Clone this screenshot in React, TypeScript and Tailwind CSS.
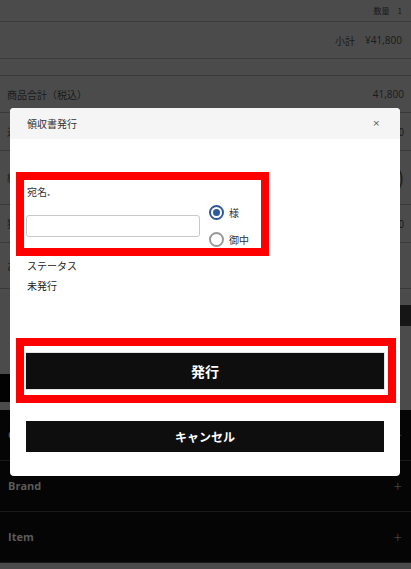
import React from "react";

const jp = { fontFamily: '"Noto Sans CJK JP", "Noto Sans", sans-serif' };

function Radio({ checked, label }: { checked: boolean; label: string }) {
  return (
    <div className="flex items-center h-[15px]">
      <span
        className={
          checked
            ? "w-[15px] h-[15px] rounded-full border-[2px] border-[#2c5a9c] bg-white flex items-center justify-center"
            : "w-[15px] h-[15px] rounded-full border-[2px] border-[#9a9a9a] bg-white"
        }
      >
        {checked && <span className="w-[7px] h-[7px] rounded-full bg-[#2c5a9c]" />}
      </span>
      <span className="ml-[5px] text-[10px] leading-[14px] text-[#333]">{label}</span>
    </div>
  );
}

export default function App() {
  return (
    <div className="relative w-[411px] h-[569px] overflow-hidden bg-[#4b4b4b]" style={jp}>
      {/* background page (dimmed) */}
      <div className="flex flex-col text-[#1a1a1a]">
        <div className="h-[22px] border-b border-[#3a3a3a] flex items-center justify-end pr-[9px] text-[8px]">
          数量　1
        </div>
        <div className="h-[37px] border-b border-[#3a3a3a] flex items-center justify-end pr-[9px] text-[10px]">
          小計　<span style={{ fontFamily: '"Open Sans", sans-serif' }}>¥41,800</span>
        </div>
        <div className="h-[17px] border-b border-[#3a3a3a]" />
        <div className="h-[37px] border-b border-[#3a3a3a] flex items-center justify-between px-[7px] text-[10px]">
          <span>商品合計（税込）</span>
          <span style={{ fontFamily: '"Open Sans", sans-serif' }}>41,800</span>
        </div>
        <div className="h-[38px] border-b border-[#3a3a3a] flex items-center justify-between px-[7px] text-[10px]">
          <span>送料</span>
          <span>0</span>
        </div>
        <div className="h-[54px] border-b border-[#3a3a3a] flex items-center justify-between px-[7px] text-[10px]">
          <span>総合計</span>
          <span className="text-[18px]">)</span>
        </div>
        <div className="h-[38px] border-b border-[#3a3a3a] flex items-center justify-between px-[7px] text-[10px]">
          <span>獲得</span>
          <span>0</span>
        </div>
        <div className="h-[46px] border-b border-[#3a3a3a] flex items-center justify-between px-[7px] text-[10px]">
          <span>お</span>
          <span></span>
        </div>
        <div className="h-[121px] pt-[16px] flex flex-col">
          <div className="h-[21px] ml-[30px] bg-[#151515]" />
          <div className="h-[28px] w-[200px] mt-[48px] bg-[#020202]" />
        </div>
        <div className="bg-[#050505] flex flex-col" style={{ fontFamily: '"Open Sans", sans-serif' }}>
          {["Category", "Brand", "Item"].map((t) => (
            <div
              key={t}
              className="h-[51px] border-b border-[#1a1a1a] flex items-center justify-between pl-[8px] pr-[9px] text-[11px] font-bold text-[#5a5a5a]"
            >
              <span>{t}</span>
              <span className="text-[15px] font-light text-[#5a5a5a]">+</span>
            </div>
          ))}
        </div>
      </div>

      {/* modal */}
      <div className="absolute left-[10px] top-[108px] w-[390px] h-[368px] bg-white rounded-[4px] overflow-hidden flex flex-col">
        <div className="h-[31px] bg-[#f5f5f5] flex items-center justify-between pl-[17px] pr-[20px]">
          <span className="text-[10px] text-[#333]">領収書発行</span>
          <span className="text-[9px] text-[#555]" style={{ fontFamily: '"DejaVu Sans", sans-serif' }}>×</span>
        </div>

        <div className="ml-[14px] mt-[41px] w-[237px] h-[68px] outline-[8px] outline-solid outline-[#ff0000] px-[2px]">
          <div className="pl-[1px] pt-[5px] mb-[5px] text-[10px] leading-[14px] text-[#333]">
            宛名<span className="inline-block text-[7px] translate-y-[3px]">*</span>
          </div>
          <div className="flex items-center">
            <div className="w-[174px] h-[22px] border border-[#c8c8c8] rounded-[3px] bg-white" />
            <div className="ml-[9px] flex flex-col gap-[12px]">
              <Radio checked label="様" />
              <Radio checked={false} label="御中" />
            </div>
          </div>
        </div>

        <div className="ml-[17px] mt-[11px] flex flex-col gap-[6px] text-[10px] leading-[14px] text-[#222]">
          <span>ステータス</span>
          <span>未発行</span>
        </div>

        <div className="ml-[14px] mt-[53px] w-[364px] outline-[8px] outline-solid outline-[#ff0000] pt-[7px] pb-[6px] pl-[2px] pr-[4px]">
          <div className="h-[36px] bg-[#0e0e0e] shadow-[0_0_0_1px_#e4e4e4] flex items-center justify-center text-white text-[14px] font-bold">
            発行
          </div>
        </div>

        <div className="ml-[16px] mt-[26px] w-[358px] h-[31px] bg-[#0e0e0e] flex items-center justify-center text-white text-[12px] font-bold">
          キャンセル
        </div>
      </div>
    </div>
  );
}
